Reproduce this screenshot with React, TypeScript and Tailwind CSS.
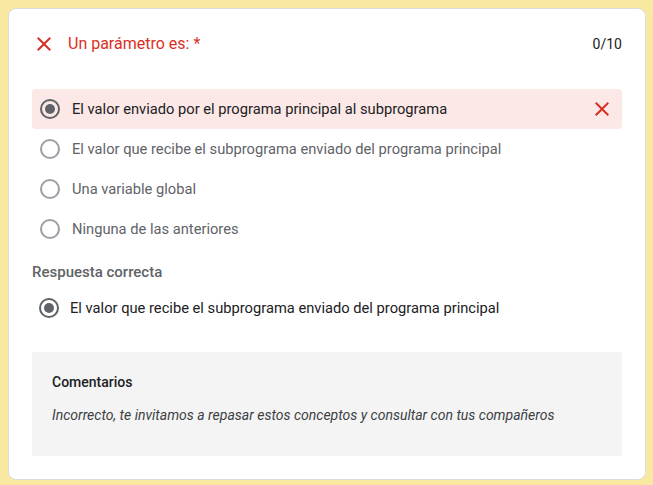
const options = [
  { label: "El valor enviado por el programa principal al subprograma", selected: true },
  { label: "El valor que recibe el subprograma enviado del programa principal", selected: false },
  { label: "Una variable global", selected: false },
  { label: "Ninguna de las anteriores", selected: false },
];

function CloseIcon({ className }: { className?: string }) {
  return (
    <svg viewBox="0 0 24 24" className={className} fill="currentColor">
      <path d="M19 6.41L17.59 5 12 10.59 6.41 5 5 6.41 10.59 12 5 17.59 6.41 19 12 13.41 17.59 19 19 17.59 13.41 12z" />
    </svg>
  );
}

function Radio({ checked }: { checked: boolean }) {
  return (
    <span
      className={`flex h-5 w-5 shrink-0 items-center justify-center rounded-full border-2 ${
        checked ? "border-[#5f6368]" : "border-[#9aa0a6]"
      }`}
    >
      {checked && <span className="h-2.5 w-2.5 rounded-full bg-[#5f6368]" />}
    </span>
  );
}

export default function App() {
  return (
    <div className="min-h-screen bg-[#f8e8a0] pb-2 pl-2 pr-[7px] pt-2 font-['Roboto',sans-serif]">
      <div className="flex flex-col rounded-lg border border-[#dadce0] bg-white px-[23px] pb-[23px] pt-[23px]">
        {/* header */}
        <div className="flex h-6 items-center">
          <CloseIcon className="h-6 w-6 text-[#d93025]" />
          <span className="ml-3 text-base text-[#d93025]">Un parámetro es: *</span>
          <span className="ml-auto text-sm text-[#202124]">0/10</span>
        </div>

        <div className="mt-[33px] flex flex-col">
          {options.map((o) => (
            <div
              key={o.label}
              className={`flex h-10 items-center rounded pl-2 pr-2 ${o.selected ? "bg-[#fce8e6]" : ""}`}
            >
              <Radio checked={o.selected} />
              <span
                className={`ml-3 text-[14.7px] ${o.selected ? "text-[#202124]" : "text-[#5f6368]"}`}
              >
                {o.label}
              </span>
              {o.selected && <CloseIcon className="ml-auto h-6 w-6 text-[#d93025]" />}
            </div>
          ))}
        </div>

        <div className="mt-[13px] text-[15px] font-medium leading-5 text-[#5f6368]">Respuesta correcta</div>

        <div className="mt-1.5 flex h-10 items-center pl-[7px]">
          <Radio checked />
          <span className="ml-[11px] text-[14.7px] text-[#202124]">
            El valor que recibe el subprograma enviado del programa principal
          </span>
        </div>

        <div className="mt-6 bg-[#f4f4f4] px-5 pb-[31px] pt-5">
          <div className="text-sm font-medium leading-5 text-[#202124]">Comentarios</div>
          <div className="mt-[13px] text-sm italic leading-5 text-[#3c4043]">
            Incorrecto, te invitamos a repasar estos conceptos y consultar con tus compañeros
          </div>
        </div>
      </div>
    </div>
  );
}
